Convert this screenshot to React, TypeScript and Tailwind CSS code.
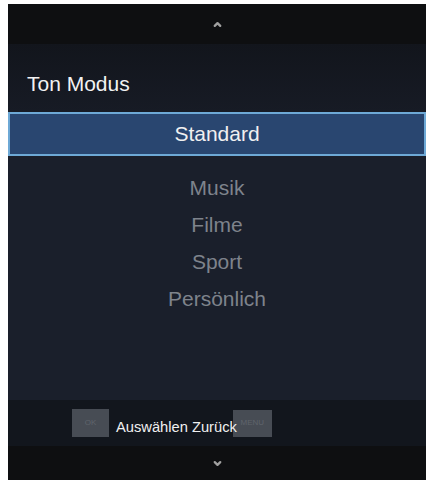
import { ChevronUp, ChevronDown } from "lucide-react";

const modes = ["Musik", "Filme", "Sport", "Persönlich"];

function App() {
  return (
    <div className="w-[428px] h-[484px] bg-white pt-[4px] pb-[4px] pl-[8px] pr-[2px] font-['Liberation_Sans',Arial,sans-serif]">
      <div className="flex flex-col h-full bg-[#1a1f2b]">
        {/* top arrow */}
        <div className="h-[40px] bg-[#0e0f11] flex items-center justify-center">
          <ChevronUp className="size-[11px] text-[#a0a0a0]" strokeWidth={5} />
        </div>

        {/* title */}
        <div className="h-[68px] bg-gradient-to-b from-[#12151c] to-[#171b25] flex items-end px-[19px] pb-[18px]">
          <span className="text-[21px] leading-none text-[#f2f2f2]">Ton Modus</span>
        </div>

        {/* selected */}
        <div className="h-[44px] border-2 border-[#6ea9d6] bg-[#294670] flex items-center justify-center">
          <span className="text-[21px] text-[#f0f0f0]">Standard</span>
        </div>

        {/* options */}
        <div className="flex-1 flex flex-col items-center pt-[13px]">
          {modes.map((m) => (
            <div key={m} className="h-[37px] flex items-center text-[21px] text-[#7e838c]">
              {m}
            </div>
          ))}
        </div>

        {/* footer hints */}
        <div className="h-[46px] bg-[#12161d] flex items-center pl-[64px]">
          <div className="w-[37px] h-[28px] bg-[#474c54] flex items-center justify-center text-[8px] text-[#5f646c]">
            OK
          </div>
          <span className="ml-[7px] text-[14.7px] text-[#f0f0f0] translate-y-[4px]">Auswählen Zurück</span>
          <div className="-ml-[4px] w-[39px] h-[27px] bg-[#474c54] flex items-center justify-center text-[8px] text-[#5f646c]">
            MENU
          </div>
        </div>

        {/* bottom arrow */}
        <div className="h-[34px] bg-[#0e0f11] flex items-center justify-center">
          <ChevronDown className="size-[11px] text-[#a0a0a0]" strokeWidth={5} />
        </div>
      </div>
    </div>
  );
}

export default App;
